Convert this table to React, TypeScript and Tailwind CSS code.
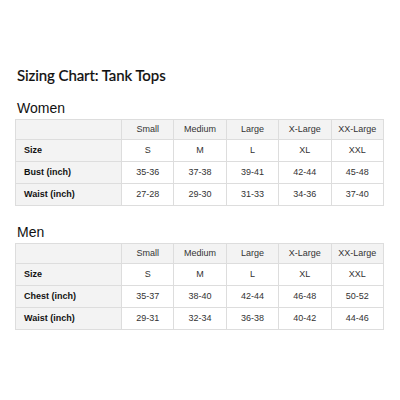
const cols = ["Small", "Medium", "Large", "X-Large", "XX-Large"];

type Row = { label: string; values: string[] };

const women: Row[] = [
  { label: "Size", values: ["S", "M", "L", "XL", "XXL"] },
  { label: "Bust (inch)", values: ["35-36", "37-38", "39-41", "42-44", "45-48"] },
  { label: "Waist (inch)", values: ["27-28", "29-30", "31-33", "34-36", "37-40"] },
];

const men: Row[] = [
  { label: "Size", values: ["S", "M", "L", "XL", "XXL"] },
  { label: "Chest (inch)", values: ["35-37", "38-40", "42-44", "46-48", "50-52"] },
  { label: "Waist (inch)", values: ["29-31", "32-34", "36-38", "40-42", "44-46"] },
];

function SizeTable({ rows }: { rows: Row[] }) {
  return (
    <table className="w-[369px] table-fixed border-collapse text-[9px]">
      <colgroup>
        <col className="w-[106px]" />
        {cols.map((c) => (
          <col key={c} />
        ))}
      </colgroup>
      <thead>
        <tr className="h-[20px] bg-[#f3f3f3]">
          <th className="border border-[#dddddd]" />
          {cols.map((c) => (
            <th key={c} className="border border-[#dddddd] text-center font-normal text-[#333]">
              {c}
            </th>
          ))}
        </tr>
      </thead>
      <tbody>
        {rows.map((r) => (
          <tr key={r.label} className="h-[22px]">
            <td className="border border-[#dddddd] bg-[#f3f3f3] pl-[8px] font-bold text-[#111]">
              {r.label}
            </td>
            {r.values.map((v, i) => (
              <td key={i} className="border border-[#dddddd] bg-white text-center text-[#333]">
                {v}
              </td>
            ))}
          </tr>
        ))}
      </tbody>
    </table>
  );
}

export default function App() {
  return (
    <div className="h-[400px] w-[400px] bg-white pl-[15px] pt-[66px] font-['Liberation_Sans',Arial,sans-serif] text-[#111]">
      <h1 className="ml-[2px] font-['Lato',sans-serif] text-[15px] leading-[18px] font-medium tracking-[-0.1px] [-webkit-text-stroke:0.15px_#111]">
        Sizing Chart: Tank Tops
      </h1>
      <h2 className="ml-[2px] mt-[16px] text-[14px] leading-[16px]">Women</h2>
      <div className="mt-[3px]">
        <SizeTable rows={women} />
      </div>
      <h2 className="ml-[2px] mt-[18px] text-[14px] leading-[16px]">Men</h2>
      <div className="mt-[3px]">
        <SizeTable rows={men} />
      </div>
    </div>
  );
}
